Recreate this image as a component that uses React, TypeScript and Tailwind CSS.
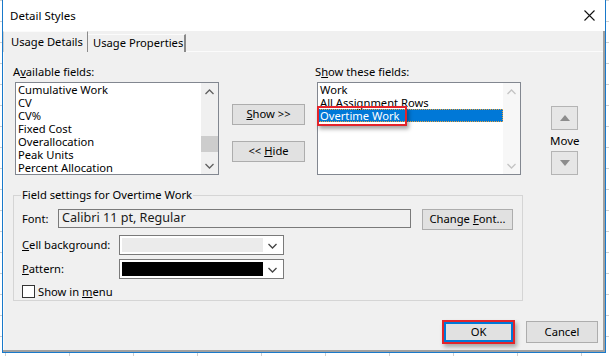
import React from "react";

const availableFields = [
  "Cumulative Work",
  "CV",
  "CV%",
  "Fixed Cost",
  "Overallocation",
  "Peak Units",
  "Percent Allocation",
];

const shownFields = ["Work", "All Assignment Rows", "Overtime Work"];

const Chevron = ({ up, color }: { up?: boolean; color: string }) => (
  <svg width="9" height="6" viewBox="0 0 9 6">
    <polyline
      points={up ? "0.5,5 4.5,1 8.5,5" : "0.5,1 4.5,5 8.5,1"}
      fill="none"
      stroke={color}
      strokeWidth="1.3"
    />
  </svg>
);

const Triangle = ({ up }: { up?: boolean }) => (
  <svg width="10" height="6" viewBox="0 0 10 6">
    <polygon points={up ? "0,6 5,0 10,6" : "0,0 10,0 5,6"} fill="#8c8c8c" />
  </svg>
);

const Button = ({ children, className = "" }: any) => (
  <button
    className={`flex items-center justify-center border border-[#adadad] bg-[#e1e1e1] text-black ${className}`}
  >
    {children}
  </button>
);

const ComboBox = ({ swatch }: { swatch: string }) => (
  <div className="flex h-[20px] w-[165px] items-center border border-[#7a7a7a] bg-white p-[2px]">
    <div className={`h-full w-[141px] ${swatch}`} />
    <div className="flex flex-1 items-center justify-center pt-[1px]">
      <Chevron color="#444" />
    </div>
  </div>
);

const App = () => {
  return (
    <div className="h-[356px] w-[609px] overflow-hidden bg-white bg-[linear-gradient(#cfcfcf_1px,transparent_1px),linear-gradient(90deg,#cfcfcf_1px,transparent_1px)] bg-[length:64px_21px] bg-[position:5px_0] font-['Noto_Sans',sans-serif] text-[11.2px] text-black">
      <div className="ml-[2px] flex h-[353px] w-[604px] flex-col border-x border-b border-[#1979ca] bg-[#f0f0f0]">
        {/* title bar */}
        <div className="flex h-[31px] items-center justify-between bg-white pl-[7px] pr-[10px]">
          <span className="text-[11.5px]">Detail Styles</span>
          <svg width="11" height="11" viewBox="0 0 11 11">
            <path d="M0.5 0.5 L10.5 10.5 M10.5 0.5 L0.5 10.5" stroke="#111" strokeWidth="1.1" />
          </svg>
        </div>

        <div className="flex flex-1 flex-col border-r-2 border-b-2 border-[#a0a0a0]">
          {/* tabs */}
          <div className="flex h-[21px] items-end">
            <div className="flex h-[21px] w-[85px] items-center border-t border-l border-r border-t-[#fbfbfb] border-l-[#d0d0d0] border-r-[#8a8a8a] pl-[7px]">
              Usage Details
            </div>
            <div className="flex h-[18px] w-[98px] items-center border-t border-r-2 border-t-[#fbfbfb] border-r-[#8a8a8a] pb-[1px] pl-[5px]">
              Usage Properties
            </div>
            <div className="flex-1 border-b border-[#fbfbfb]" />
          </div>

          {/* body */}
          <div className="flex flex-1 flex-col border-l border-[#fbfbfb] pl-[9px]">
            <div className="mt-[12px] flex items-start">
              <div className="flex flex-col">
                <span className="h-[18px] leading-[15px]">
                  A<u>v</u>ailable fields:
                </span>
                <div className="ml-[2px] flex h-[93px] w-[204px] border border-[#828790] bg-white">
                  <div className="flex-1 overflow-hidden pl-[2px] leading-[13px]">
                    {availableFields.map((f) => (
                      <div key={f} className="h-[13px] whitespace-nowrap">
                        {f}
                      </div>
                    ))}
                  </div>
                  <div className="flex w-[17px] flex-col bg-[#f0f0f0]">
                    <div className="flex h-[17px] items-center justify-center">
                      <Chevron up color="#606060" />
                    </div>
                    <div className="flex flex-1 flex-col">
                      <div className="h-[36px]" />
                      <div className="h-[16px] bg-[#cdcdcd]" />
                    </div>
                    <div className="flex h-[17px] items-center justify-center">
                      <Chevron color="#606060" />
                    </div>
                  </div>
                </div>
              </div>

              <div className="ml-[13px] mt-[40px] flex flex-col">
                <Button className="h-[21px] w-[73px]">
                  <u>S</u>how &gt;&gt;
                </Button>
                <Button className="mt-[16px] h-[21px] w-[73px]">
                  &lt;&lt; <u className="ml-[3px]">H</u>ide
                </Button>
              </div>

              <div className="ml-[10px] flex flex-col">
                <span className="h-[18px] leading-[15px]">
                  S<u>h</u>ow these fields:
                </span>
                <div className="relative ml-[2px] flex h-[93px] w-[204px] border border-[#828790] bg-white">
                  <div className="flex-1 leading-[13px]">
                    {shownFields.map((f, i) =>
                      i === 2 ? (
                        <div
                          key={f}
                          className="h-[13px] bg-[#0078d7] pl-[2px] text-white outline-1 -outline-offset-1 outline-dotted outline-[#e9a23b]"
                        >
                          {f}
                        </div>
                      ) : (
                        <div key={f} className="h-[13px] whitespace-nowrap pl-[2px]">
                          {f}
                        </div>
                      )
                    )}
                  </div>
                  <div className="flex w-[17px] flex-col justify-between bg-[#f7f7f7]">
                    <div className="flex h-[17px] items-center justify-center">
                      <Chevron up color="#c4c4c4" />
                    </div>
                    <div className="flex h-[17px] items-center justify-center">
                      <Chevron color="#c4c4c4" />
                    </div>
                  </div>
                  <div className="absolute left-[-1px] top-[23px] h-[20px] w-[90px] border-2 border-[#e3242b] shadow-[2px_3px_4px_rgba(0,0,0,0.35)]" />
                </div>
              </div>

              <div className="ml-[29px] mt-[42px] flex flex-col items-center">
                <button className="flex h-[24px] w-[27px] items-center justify-center border border-[#b4b4b4] bg-[#e6e6e6]">
                  <Triangle up />
                </button>
                <span className="mt-[4px] h-[17px] text-[11.5px] leading-[13px]">Move</span>
                <button className="flex h-[24px] w-[27px] items-center justify-center border border-[#b4b4b4] bg-[#e6e6e6]">
                  <Triangle />
                </button>
              </div>
            </div>

            {/* field settings group */}
            <fieldset className="mt-[13px] ml-0 w-[510px] border border-[#d5d5d5] pb-[2px] pl-[8px]">
              <legend className="-ml-[1px] px-[1px] leading-[14px]">Field settings for Overtime Work</legend>
              <div className="mt-[7px] flex items-start">
                <span className="w-[36px] pt-[3px] leading-[14px]">Font:</span>
                <div className="flex h-[19px] w-[353px] items-center border border-[#7a7a7a] bg-[#f0f0f0] pl-[3px] text-[12.6px] text-[#1a1a1a]">
                  Calibri 11 pt, Regular
                </div>
                <Button className="ml-[11px] h-[21px] w-[91px]">
                  Change <u className="ml-[3px]">F</u>ont...
                </Button>
              </div>
              <div className="mt-[5px] flex items-center">
                <span className="w-[97px]">
                  <u>C</u>ell background:
                </span>
                <ComboBox swatch="bg-[#ebebeb]" />
              </div>
              <div className="mt-[4px] flex items-center">
                <span className="w-[97px]">
                  <u>P</u>attern:
                </span>
                <ComboBox swatch="bg-black" />
              </div>
              <div className="mt-[6px] flex items-center">
                <div className="h-[13px] w-[13px] border border-[#333] bg-white" />
                <span className="ml-[3px] leading-[13px]">
                  Show in <u>m</u>enu
                </span>
              </div>
            </fieldset>

            {/* dialog buttons */}
            <div className="mt-[19px] flex items-start justify-end pr-[5px]">
              <div className="h-[24px] w-[73px] border-2 border-[#e3242b] shadow-[2px_3px_4px_rgba(0,0,0,0.3)]">
                <button className="flex h-full w-full items-center justify-center border-2 border-[#0078d7] bg-[#e1e1e1]">
                  OK
                </button>
              </div>
              <Button className="ml-[11px] mt-[1px] h-[22px] w-[72px]">Cancel</Button>
            </div>
          </div>
        </div>
      </div>
    </div>
  );
};

export default App;
